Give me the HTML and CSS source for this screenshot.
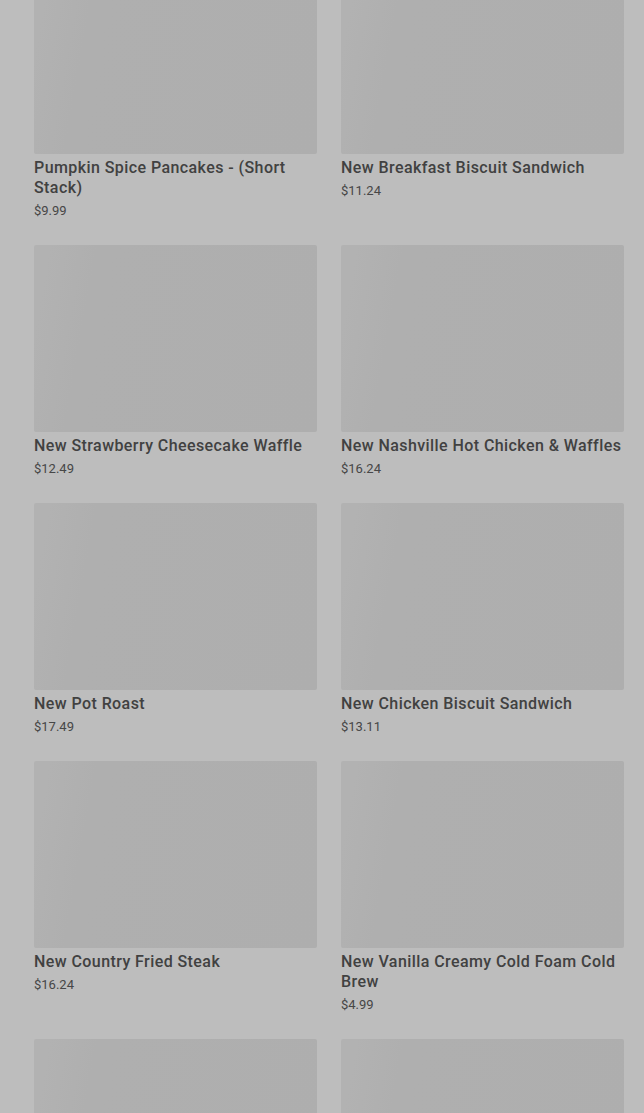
FILE: index.html
```html
<!DOCTYPE html>
<html lang="en">
<head>
    <meta charset="UTF-8">
    <meta name="viewport" content="width=device-width, initial-scale=1.0">
    <title>Menu</title>
    <link rel="stylesheet" href="styles.css">
</head>
<body>
    <div class="menu-grid">
        <div class="item">
            <div class="item-img"></div>
            <div class="item-name">Pumpkin Spice Pancakes - (Short Stack)</div>
            <div class="item-price">$9.99</div>
        </div>
        <div class="item">
            <div class="item-img"></div>
            <div class="item-name">New Breakfast Biscuit Sandwich</div>
            <div class="item-price">$11.24</div>
        </div>
        <div class="item">
            <div class="item-img"></div>
            <div class="item-name">New Strawberry Cheesecake Waffle</div>
            <div class="item-price">$12.49</div>
        </div>
        <div class="item">
            <div class="item-img"></div>
            <div class="item-name">New Nashville Hot Chicken &amp; Waffles</div>
            <div class="item-price">$16.24</div>
        </div>
        <div class="item">
            <div class="item-img"></div>
            <div class="item-name">New Pot Roast</div>
            <div class="item-price">$17.49</div>
        </div>
        <div class="item">
            <div class="item-img"></div>
            <div class="item-name">New Chicken Biscuit Sandwich</div>
            <div class="item-price">$13.11</div>
        </div>
        <div class="item">
            <div class="item-img"></div>
            <div class="item-name">New Country Fried Steak</div>
            <div class="item-price">$16.24</div>
        </div>
        <div class="item">
            <div class="item-img"></div>
            <div class="item-name">New Vanilla Creamy Cold Foam Cold Brew</div>
            <div class="item-price">$4.99</div>
        </div>
        <div class="item">
            <div class="item-img"></div>
        </div>
        <div class="item">
            <div class="item-img"></div>
        </div>
    </div>
    <div class="overlay"></div>
</body>
</html>
```

FILE: styles.css
```css
body {
    margin: 0;
    background-color: #ffffff;
    font-family: Roboto, "Noto Sans", Arial, sans-serif;
    overflow: hidden;
}
.menu-grid {
    display: grid;
    grid-template-columns: 283px 283px;
    column-gap: 24px;
    row-gap: 24px;
    padding: 0 20px 0 34px;
    margin-top: -33px;
}
.item-img {
    height: 187px;
    border-radius: 2px;
    background: linear-gradient(100deg, #f1f1f1 0%, #ececec 25%, #ebebeb 100%);
}
.item-name {
    margin-top: 4px;
    font-size: 16px;
    line-height: 20px;
    font-weight: 500;
    letter-spacing: 0.42px;
    color: #585858;
}
.item-price {
    margin-top: 3px;
    font-size: 13px;
    line-height: 20px;
    color: #606060;
}
.overlay {
    position: fixed;
    inset: 0;
    background: rgba(0, 0, 0, 0.26);
}
```
